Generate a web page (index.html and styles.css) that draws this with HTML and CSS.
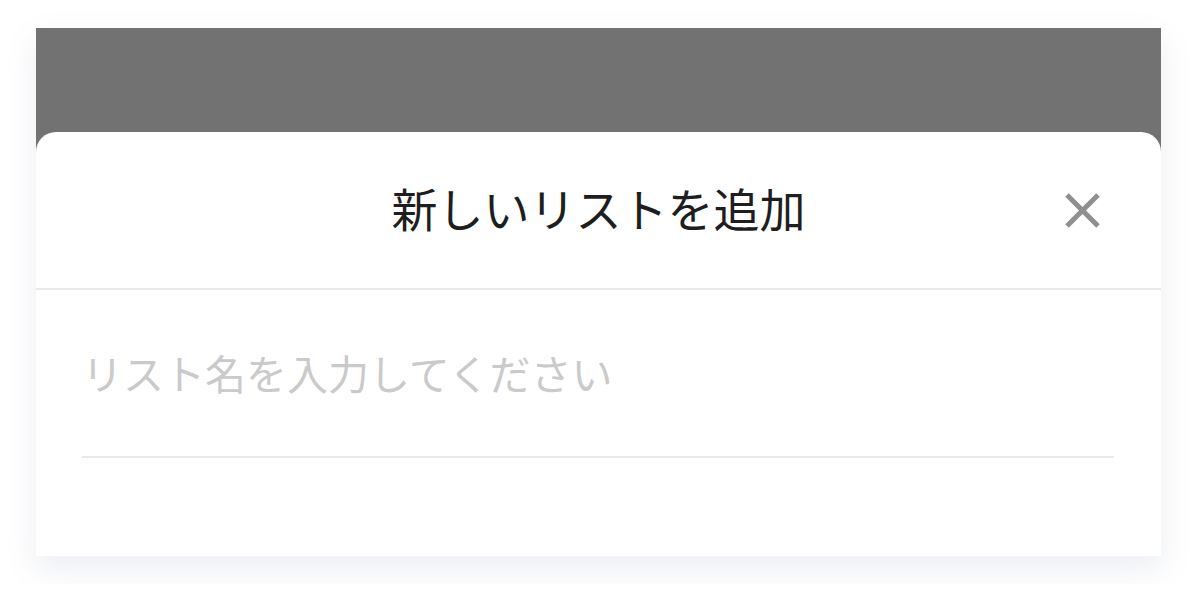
FILE: index.html
```html
<!DOCTYPE html>
<html lang="ja">
<head>
<meta charset="utf-8">
<link rel="stylesheet" href="styles.css">
</head>
<body>
<div class="card">
  <div class="backdrop"></div>
  <div class="sheet">
    <div class="header">
      <div class="spacer"></div>
      <h1 class="title">新しいリストを追加</h1>
      <button class="close" aria-label="閉じる">
        <svg width="35" height="35" viewBox="0 0 35 35"><path d="M2 2L33 33M33 2L2 33" stroke="#8f8f8f" stroke-width="5" fill="none"/></svg>
      </button>
    </div>
    <div class="body">
      <input class="name-input" type="text" placeholder="リスト名を入力してください">
    </div>
  </div>
</div>
</body>
</html>
```
FILE: styles.css
```css
html, body {
  margin: 0;
  background: #ffffff;
}
body {
  padding: 28px 36px;
  font-family: "Noto Sans CJK JP", "Noto Sans", sans-serif;
}
.card {
  width: 1125px;
  height: 528px;
  background: #727272;
  box-shadow: 0 12px 30px rgba(90, 110, 150, 0.12);
  display: flex;
  flex-direction: column;
}
.backdrop {
  height: 104px;
  flex: none;
}
.sheet {
  flex: 1;
  background: #ffffff;
  border-radius: 20px 20px 0 0;
  display: flex;
  flex-direction: column;
}
.header {
  height: 156px;
  display: grid;
  grid-template-columns: 1fr auto 1fr;
  align-items: center;
  border-bottom: 2px solid #e9e9e9;
}
.title {
  margin: 0 0 6px 0;
  font-size: 46px;
  font-weight: 400;
  color: #1e1e1e;
  line-height: 1;
  letter-spacing: 0;
}
.close {
  justify-self: end;
  margin-right: 61px;
  width: 35px;
  height: 35px;
  padding: 0;
  border: none;
  background: none;
  display: flex;
}
.body {
  padding: 0 47px 0 46px;
}
.name-input {
  display: block;
  width: 100%;
  box-sizing: border-box;
  border: none;
  border-bottom: 2px solid #e9e9e9;
  outline: none;
  background: transparent;
  font-family: "Noto Sans CJK JP", "Noto Sans", sans-serif;
  font-size: 41px;
  line-height: 58px;
  height: 168px;
  padding: 53px 0 55px 0;
  margin: 0;
  color: #1e1e1e;
}
.name-input::placeholder {
  color: #cacaca;
}
```
